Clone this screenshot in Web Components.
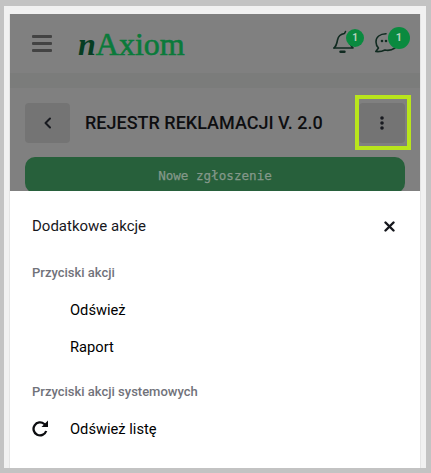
<!DOCTYPE html>
<html lang="pl">
<head>
<meta charset="utf-8">
<title>nAxiom</title>
<style>
  html, body { margin: 0; padding: 0; }
  body { width: 431px; height: 473px; background: #c3c3c3; overflow: hidden; font-family: Roboto, "Liberation Sans", sans-serif; }
</style>
</head>
<body>
<app-frame>
  <app-header slot="page"></app-header>
  <title-bar slot="page" heading="REJESTR REKLAMACJI V. 2.0"></title-bar>
  <new-button slot="page">Nowe zgłoszenie</new-button>
  <action-sheet slot="sheet" heading="Dodatkowe akcje">
    <action-group label="Przyciski akcji">
      <action-row>Odśwież</action-row>
      <action-row>Raport</action-row>
    </action-group>
    <action-group label="Przyciski akcji systemowych">
      <action-row refresh>Odśwież listę</action-row>
    </action-group>
  </action-sheet>
</app-frame>

<script>
  class AppFrame extends HTMLElement {
    constructor() {
      super();
      this.attachShadow({ mode: "open" });
      this.shadowRoot.innerHTML = `
        <style>
          :host {
            display: block;
            box-sizing: border-box;
            width: 422px;
            height: 462px;
            margin: 6px 0 0 4px;
            padding: 8px 5px 0;
            background: #f1f1f1;
          }
          .screen {
            display: flex;
            flex-direction: column;
            height: 100%;
            border: solid #e4e4e4;
            border-width: 0 1px;
            background: #808080;
          }
          .page { display: block; flex: none; height: 177px; overflow: hidden; }
          .sheet { display: block; flex: 1; min-height: 0; }
        </style>
        <div class="screen">
          <div class="page"><slot name="page"></slot></div>
          <div class="sheet"><slot name="sheet"></slot></div>
        </div>
      `;
    }
  }

  class AppHeader extends HTMLElement {
    constructor() {
      super();
      this.attachShadow({ mode: "open" });
      this.shadowRoot.innerHTML = `
        <style>
          :host {
            display: flex;
            align-items: center;
            box-sizing: border-box;
            height: 59px;
            padding: 0 10px 0 22px;
            background: #808080;
          }
          .menu { display: block; width: 20px; height: 17px; flex: none; }
          .logo {
            margin: 0 0 0 26px;
            font: 400 32px/1 "Liberation Serif", serif;
            -webkit-text-stroke: 0.6px #0a7a3a;
            color: #0a7a3a;
          }
          .logo i { color: #063d22; font-weight: 700; -webkit-text-stroke: 0; }
          .icons { margin-left: auto; display: flex; gap: 11px; }
          .ico { position: relative; display: block; height: 30px; }
          .ico svg { display: block; position: absolute; left: 0; top: 2px; overflow: visible; }
          .dot {
            position: absolute;
            display: flex;
            align-items: center;
            justify-content: center;
            border-radius: 50%;
            background: #0a8a3f;
            color: #b4d2bc;
            font: 700 10px/1 Roboto, sans-serif;
          }
        </style>
        <svg class="menu" viewBox="0 0 20 17">
          <g fill="#434343">
            <rect x="0" y="0" width="20" height="3" rx="1"/>
            <rect x="0" y="7" width="20" height="3" rx="1"/>
            <rect x="0" y="14" width="20" height="3" rx="1"/>
          </g>
        </svg>
        <span class="logo"><i>n</i>Axiom</span>
        <div class="icons">
          <div class="ico" style="width:31px">
            <svg width="22" height="24" viewBox="0 0 22 24" fill="none" stroke="#102a20" stroke-width="1.6" stroke-linejoin="round" stroke-linecap="round">
              <path d="M1 17C3.500 15 4 12 4.500 9 5.200 5.500 8 3 11.500 2.500L12.500 .5"/>
              <path d="M1 17H20C18 15.500 17.500 14 17 11"/>
              <path d="M7.500 20.800h4" stroke-width="2.400"/>
            </svg>
            <span class="dot" style="left:13px;top:0;width:18px;height:18px">1</span>
          </div>
          <div class="ico" style="width:35px">
            <svg width="22" height="22" viewBox="0 0 22 22" fill="none" stroke="#102a20" stroke-width="1.6" stroke-linejoin="round" stroke-linecap="round" style="top:4px">
              <path d="M11 .8C5 1 1 4 1 9 1 11.500 2 13.500 3.500 15L.8 18.500C5 19 8 18 10 17 14 18 17 17 20 15"/>
              <circle cx="7" cy="8" r=".5" fill="#102a20"/>
              <circle cx="11" cy="8" r=".5" fill="#102a20"/>
            </svg>
            <span class="dot" style="left:13px;top:-2px;width:22px;height:22px;font-size:11px">1</span>
          </div>
        </div>
      `;
    }
  }

  class TitleBar extends HTMLElement {
    constructor() {
      super();
      this.attachShadow({ mode: "open" });
      this.shadowRoot.innerHTML = `
        <style>
          :host {
            display: flex;
            align-items: center;
            box-sizing: border-box;
            height: 70px;
            padding: 30px 15px 0;
            background: linear-gradient(#7b7c7b 0, #7b7c7b 15px, #808080 15px);
          }
          .btn {
            display: flex;
            align-items: center;
            justify-content: center;
            flex: none;
            width: 45px;
            height: 40px;
            border-radius: 4px;
            background: #747474;
          }
          h1 {
            margin: 0 0 0 15px;
            font: 500 18px/1 Roboto, sans-serif;
            color: #0e0e10;
            white-space: nowrap;
          }
          .more { width: 46px; margin-left: auto; position: relative; }
          .more::after {
            content: "";
            position: absolute;
            inset: -8px -6px -7px -4px;
            border: 4px solid #b9e51c;
          }
          svg { display: block; }
        </style>
        <div class="btn">
          <svg width="10" height="14" viewBox="0 0 10 14" fill="none" stroke="#181a20" stroke-width="2" stroke-linecap="round" stroke-linejoin="round"><path d="M7 2.500 2.500 7 7 11.500"/></svg>
        </div>
        <h1></h1>
        <div class="btn more">
          <svg width="6" height="14" viewBox="0 0 6 14" fill="#181a20"><circle cx="3" cy="2" r="1.800"/><circle cx="3" cy="7" r="1.800"/><circle cx="3" cy="12" r="1.800"/></svg>
        </div>
      `;
      this.shadowRoot.querySelector("h1").textContent = this.getAttribute("heading");
    }
  }

  class NewButton extends HTMLElement {
    constructor() {
      super();
      this.attachShadow({ mode: "open" });
      this.shadowRoot.innerHTML = `
        <style>
          :host {
            display: flex;
            align-items: center;
            justify-content: center;
            box-sizing: border-box;
            height: 36px;
            margin: 14px 15px 0;
            padding-top: 2px;
            border-radius: 10px;
            background: #27603b;
            color: #84988a;
            font: 400 12.6px/1 "DejaVu Sans Mono", "Liberation Mono", monospace;
            -webkit-text-stroke: 0.25px #84988a;
          }
        </style>
        <slot></slot>
      `;
    }
  }

  class ActionSheet extends HTMLElement {
    constructor() {
      super();
      this.attachShadow({ mode: "open" });
      this.shadowRoot.innerHTML = `
        <style>
          :host {
            display: block;
            box-sizing: border-box;
            height: 100%;
            padding: 15px 22px 0;
            background: #fff;
          }
          header {
            display: flex;
            align-items: center;
            justify-content: space-between;
            height: 40px;
            margin-bottom: 17px;
          }
          h2 { margin: 0; font: 400 15px/1 Roboto, sans-serif; color: #17171c; }
          svg { display: block; margin-right: 3px; }
        </style>
        <header>
          <h2></h2>
          <svg width="11" height="11" viewBox="0 0 11 11" stroke="#15171d" stroke-width="2.400" stroke-linecap="round"><path d="M1.500 1.500l8 8M9.500 1.500l-8 8"/></svg>
        </header>
        <slot></slot>
      `;
      this.shadowRoot.querySelector("h2").textContent = this.getAttribute("heading");
    }
  }

  class ActionGroup extends HTMLElement {
    constructor() {
      super();
      this.attachShadow({ mode: "open" });
      this.shadowRoot.innerHTML = `
        <style>
          :host { display: block; margin-bottom: 16px; }
          .label {
            height: 20px;
            margin-bottom: 9px;
            font: 500 13px/20px Roboto, sans-serif;
            color: #71727a;
          }
        </style>
        <div class="label"></div>
        <slot></slot>
      `;
      this.shadowRoot.querySelector(".label").textContent = this.getAttribute("label");
    }
  }

  class ActionRow extends HTMLElement {
    constructor() {
      super();
      this.attachShadow({ mode: "open" });
      const icon = this.hasAttribute("refresh")
        ? `<svg width="16" height="17" viewBox="0 0 16 17" fill="none" style="margin-top:-2px"><path d="M14.200 11A6.500 6.500 0 1 1 12.300 4L14 5.800" stroke="#0c0d10" stroke-width="2.300"/><path d="M16 .5V7H9.500Z" fill="#0c0d10"/></svg>`
        : "";
      this.shadowRoot.innerHTML = `
        <style>
          :host {
            display: flex;
            align-items: center;
            height: 37px;
            font: 400 14.7px/1 Roboto, sans-serif;
            color: #000;
          }
          .icon { width: 38px; flex: none; }
          svg { display: block; }
        </style>
        <span class="icon">${icon}</span>
        <slot></slot>
      `;
    }
  }

  customElements.define("app-frame", AppFrame);
  customElements.define("app-header", AppHeader);
  customElements.define("title-bar", TitleBar);
  customElements.define("new-button", NewButton);
  customElements.define("action-sheet", ActionSheet);
  customElements.define("action-group", ActionGroup);
  customElements.define("action-row", ActionRow);
</script>
</body>
</html>
